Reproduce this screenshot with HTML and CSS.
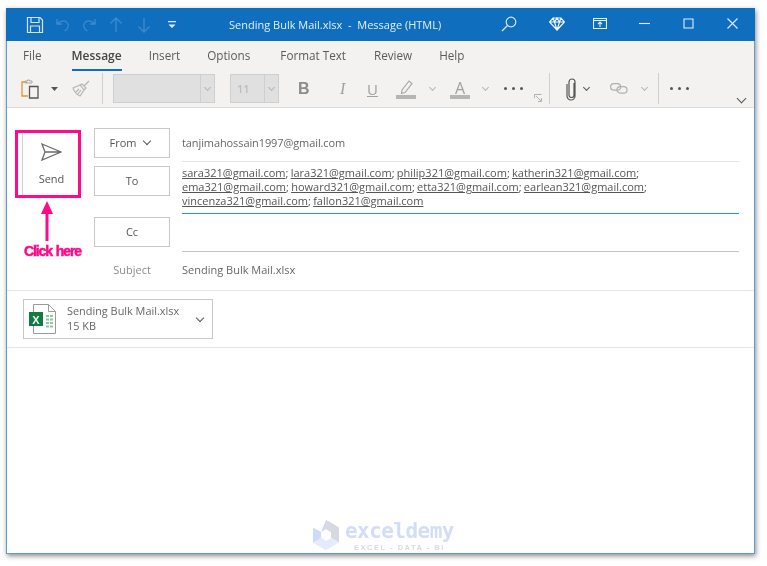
FILE: index.html
```html
<!DOCTYPE HTML>
<html>

<head>
  <meta charset="UTF-8">
  <title>Sending Bulk Mail.xlsx - Message (HTML)</title>
  <link rel="stylesheet" href="styles.css">
</head>

<body>
  <div class="window">

    <div class="titlebar">
      <div class="quick">
        <svg class="qa qa-save" width="18" height="18" viewBox="0 0 18 18" fill="none" stroke="#d5e6f6" stroke-width="1.2"><path d="M1.5 1.5h12.5l2.5 2.5v12.500h-15z"/><path d="M5 1.500v5h8v-5M4.500 16.500v-6.500h9v6.500"/></svg>
        <svg class="qa qa-undo" width="16" height="16" viewBox="0 0 16 16" fill="none" stroke="#3d8bcf" stroke-width="1.300"><path d="M2 2v5h5M2.500 6.500c3-3.500 8-3.500 10 -.5s.5 6-3 8"/></svg>
        <svg class="qa qa-redo" width="16" height="16" viewBox="0 0 16 16" fill="none" stroke="#3d8bcf" stroke-width="1.300"><path d="M14 2v5h-5M13.500 6.500c-3-3.500-8-3.500-10-.5s-.5 6 3 8"/></svg>
        <svg class="qa qa-up" width="14" height="16" viewBox="0 0 14 16" fill="none" stroke="#3d8bcf" stroke-width="1.300"><path d="M7 15v-14M1.500 6.500l5.500-5.500 5.500 5.500"/></svg>
        <svg class="qa qa-down" width="14" height="16" viewBox="0 0 14 16" fill="none" stroke="#3d8bcf" stroke-width="1.300"><path d="M7 1v14M1.500 9.500l5.500 5.500 5.500-5.500"/></svg>
        <svg class="qa qa-more" width="8" height="8" viewBox="0 0 8 8" fill="#e3eef8"><path d="M0 0h8v1.200h-8zM.5 3.500h7l-3.500 3.500z"/></svg>
      </div>
      <div class="doc-title">Sending Bulk Mail.xlsx&nbsp; -&nbsp; Message (HTML)</div>
      <div class="win-buttons">
        <svg class="wb wb-search" width="16" height="16" viewBox="0 0 16 16" fill="none" stroke="#d5e6f6" stroke-width="1.200"><circle cx="10" cy="6" r="4.800"/><path d="M6.500 9.500l-5.500 5.500"/></svg>
        <svg class="wb wb-gem" width="16" height="14" viewBox="0 0 16 14" fill="none" stroke="#f2f7fc" stroke-width="1.200"><path d="M4 1h8l3.500 4-7.500 8-7.500-8zM.5 5h15M5.500 5l2.500 8 2.500-8M4 1l1.500 4 2.500-4 2.500 4 1.500-4"/></svg>
        <svg class="wb wb-box" width="14" height="11" viewBox="0 0 14 11" fill="none" stroke="#e3eef8" stroke-width="1.100"><path d="M.5.500h13v10h-13zM.5 2.500h13M7 9v-5M5 6l2-2 2 2"/></svg>
        <svg class="wb wb-min" width="11" height="11" viewBox="0 0 11 11" fill="none" stroke="#e3eef8" stroke-width="1.100"><path d="M0 5.500h11"/></svg>
        <svg class="wb wb-max" width="11" height="11" viewBox="0 0 11 11" fill="none" stroke="#e3eef8" stroke-width="1.100"><path d="M1 1h9v9h-9z"/></svg>
        <svg class="wb wb-close" width="11" height="11" viewBox="0 0 11 11" fill="none" stroke="#e3eef8" stroke-width="1.100"><path d="M.5.500l10 10M10.500.500l-10 10"/></svg>
      </div>
    </div>

    <div class="tabs">
      <span class="tab tab-file">File</span>
      <span class="tab tab-message">Message</span>
      <span class="tab tab-insert">Insert</span>
      <span class="tab tab-options">Options</span>
      <span class="tab tab-format">Format Text</span>
      <span class="tab tab-review">Review</span>
      <span class="tab tab-help">Help</span>
    </div>

    <div class="ribbon">
      <svg class="ri ri-paste" width="18" height="20" viewBox="0 0 18 20" fill="none"><path d="M6 3h-5v14h6" stroke="#e8932c" stroke-width="1.300"/><path d="M4 4v-2h2.500v-1h2v1h2.500v2z" stroke="#a8a8a8"/><path d="M8.500 7.500h8.500v11.500h-8.500z" stroke="#555" stroke-width="1.300"/></svg>
      <svg class="ri ri-caret1 caret-dark" width="7" height="4" viewBox="0 0 7 4"><path d="M0 0h7l-3.500 4z" fill="#555"/></svg>
      <svg class="ri ri-brush" width="18" height="17" viewBox="0 0 18 17" fill="none" stroke="#b5b5b5" stroke-width="1.200"><path d="M1 8l7-3 4 5-4 6c-3-1-6-5-7-8zM8 5l2-1 4 4-2 2M12 6l5-5M4 12l3-3M6 14l3-4"/></svg>
      <div class="sep sep-a"></div>
      <div class="combo combo-font"><span class="combo-text"></span><span class="combo-arrow"><i class="chev"></i></span></div>
      <div class="combo combo-size"><span class="combo-text">11</span><span class="combo-arrow"><i class="chev"></i></span></div>
      <span class="ri ri-b">B</span>
      <span class="ri ri-i">I</span>
      <span class="ri ri-u">U</span>
      <svg class="ri ri-pen" width="20" height="20" viewBox="0 0 20 20" fill="none"><path d="M6 11l7-9 3 2.500-7 9-3.500 1z" stroke="#a8a8a8" stroke-width="1.200"/><path d="M0 16h20v4h-20z" fill="#b5b5b5"/></svg>
      <i class="chev ri ri-pcaret"></i>
      <div class="ri ri-a"><span>A</span></div>
      <i class="chev ri ri-acaret"></i>
      <span class="ri ri-dots1"><i></i><i></i><i></i></span>
      <svg class="ri ri-launch" width="8" height="8" viewBox="0 0 8 8" fill="none" stroke="#b0b0b0"><path d="M7.500 4v3.500h-3.500M.5 4v-3.500h7M2 2l5 5"/></svg>
      <div class="sep sep-b"></div>
      <svg class="ri ri-clip" width="11" height="24" viewBox="0 0 11 24" fill="none" stroke="#555" stroke-width="1.200"><path d="M8 6v12a2.500 2.500 0 0 1-5 0v-13a3 3 0 0 1 6 0v14a4 4 0 0 1-8 0v-12"/></svg>
      <i class="chev chev-dark ri ri-ccaret"></i>
      <svg class="ri ri-link" width="18" height="11" viewBox="0 0 18 11" fill="none" stroke="#b0b0b0" stroke-width="1.200"><rect x=".6" y=".6" width="10" height="6.500" rx="3.200"/><rect x="7" y="3.600" width="10" height="6.500" rx="3.200"/></svg>
      <i class="chev ri ri-lcaret"></i>
      <div class="sep sep-c"></div>
      <span class="ri ri-dots2"><i></i><i></i><i></i></span>
      <i class="chev chev-dark ri ri-collapse"></i>
    </div>

    <div class="compose">
      <div class="send-btn">
        <svg width="21" height="18" viewBox="0 0 21 18" fill="none" stroke="#6a6a6a" stroke-width="1.300"><path d="M1 1l19 8-19 8 3-8zM4 9h16"/></svg>
        <span>Send</span>
      </div>
      <div class="fields">
        <div class="row row-from">
          <div class="btn-box">From <i class="chev chev-dark chev-from"></i></div>
          <div class="field field-from">tanjimahossain1997@gmail.com</div>
        </div>
        <div class="row row-to">
          <div class="btn-box">To</div>
          <div class="field-wrap">
            <div class="field-to">
              <u>sara321@gmail.com</u>; <u>lara321@gmail.com</u>; <u>philip321@gmail.com</u>; <u>katherin321@gmail.com</u>;<br>
              <u>ema321@gmail.com</u>; <u>howard321@gmail.com</u>; <u>etta321@gmail.com</u>; <u>earlean321@gmail.com</u>;<br>
              <u>vincenza321@gmail.com</u>; <u>fallon321@gmail.com</u>
            </div>
            <div class="focus-line"></div>
          </div>
        </div>
        <div class="row row-cc">
          <div class="btn-box">Cc</div>
          <div class="field field-cc"></div>
        </div>
        <div class="row row-subject">
          <div class="subject-label">Subject</div>
          <div class="field-subject">Sending Bulk Mail.xlsx</div>
        </div>
      </div>
    </div>

    <div class="attachments">
      <div class="attach-card">
        <svg class="xl-icon" width="28" height="30" viewBox="0 0 28 30">
          <path d="M4.500.5h15l7 7v22h-22z" fill="#fff" stroke="#9a9a9a"/>
          <path d="M19.500.5v7h7" fill="none" stroke="#9a9a9a"/>
          <path d="M17 11h3v2h-3zM21 11h3v2h-3zM17 14.500h3v2h-3zM21 14.500h3v2h-3zM17 18h3v2h-3zM21 18h3v2h-3zM17 21.500h3v2h-3zM21 21.500h3v2h-3z" fill="#8fc5a2"/>
          <rect x="0" y="8" width="14" height="14" fill="#107c41"/>
          <text class="xl-letter" x="7" y="19.500" text-anchor="middle">X</text>
        </svg>
        <div class="attach-info">
          <div>Sending Bulk Mail.xlsx</div>
          <div>15 KB</div>
        </div>
        <i class="chev chev-dark chev-attach"></i>
      </div>
    </div>
  </div>

  <!-- annotation on top of the screenshot -->
  <div class="mark-box"></div>
  <svg class="mark-arrow" width="14" height="40" viewBox="0 0 14 40"><path d="M7 0l6 13h-4.500v27h-3v-27h-4.500z" fill="#ff0a8c"/></svg>
  <div class="mark-text">Click here</div>

  <div class="watermark">
    <svg width="28" height="32" viewBox="0 0 28 32">
      <path d="M14 1l13 7.500-8 4.500-5-3-5 3z" fill="#ccd8f4"/>
      <path d="M14 1l13 7.500v15l-8-4.500v-6l-5-3z" fill="#d6d9de"/>
      <path d="M1 8.500l8 4.500v6l5 3v9l-13-7.500z" fill="#cddaf8"/>
      <path d="M14 22l5-3 8 4.500-13 7.500-13-7.500 8-4.500z" fill="#e4ecfb"/>
    </svg>
    <div class="wm-text">
      <div class="wm-name">exceldemy</div>
      <div class="wm-sub">EXCEL - DATA - BI</div>
    </div>
  </div>
</body>

</html>
```

FILE: styles.css
```css
html, body {
  margin: 0;
  padding: 0;
  background: #fff;
}

body {
  width: 767px;
  height: 566px;
  overflow: hidden;
  position: relative;
  font-family: "Open Sans", "Noto Sans", sans-serif;
  color: #555;
  filter: blur(.3px);
}

.window {
  margin: 8px 0 0 6px;
  width: 747px;
  height: 545px;
  border: 1px solid #5c9bd6;
  border-top: 0;
  background: #fff;
  box-shadow: 1px 2px 5px rgba(0, 0, 0, .45);
  display: flex;
  flex-direction: column;
}

/* title bar */
.titlebar {
  flex: none;
  height: 33px;
  background: #106ebe;
  display: flex;
  align-items: center;
  margin: 0 -1px;
  color: #e3eef8;
  font-size: 11px;
}

.quick {
  flex: none;
  width: 223px;
  display: flex;
  align-items: center;
  padding-left: 20px;
  box-sizing: border-box;
}

.qa-undo { margin-left: 11px; }
.qa-redo { margin-left: 10px; }
.qa-up { margin-left: 12px; }
.qa-down { margin-left: 14px; }
.qa-more { margin-left: 17px; }

.doc-title {
  flex: 1;
  white-space: nowrap;
}

.win-buttons {
  flex: none;
  display: flex;
  align-items: center;
  padding-right: 17px;
  margin-top: -2px;
}

.wb-gem { margin-left: 32px; }
.wb-box { margin-left: 28px; }
.wb-min { margin-left: 32px; }
.wb-max { margin-left: 33px; }
.wb-close { margin-left: 33px; }

/* tabs */
.tabs {
  flex: none;
  height: 31px;
  background: #f3f2f1;
  display: flex;
  align-items: flex-start;
  font-size: 11.700px;
  line-height: 17px;
  padding-top: 6px;
  box-sizing: border-box;
  position: relative;
}

.tab { color: #5a5a5a; }
.tab-file { margin-left: 16px; }
.tab-message {
  margin-left: 30px;
  font-size: 12px;
  font-weight: 600;
  color: #444;
  height: 24px;
  border-bottom: 2px solid #106ebe;
  box-sizing: border-box;
}
.tab-insert { margin-left: 27px; }
.tab-options { margin-left: 27px; }
.tab-format { margin-left: 30px; }
.tab-review { margin-left: 28px; }
.tab-help { margin-left: 27px; }

/* ribbon */
.ribbon {
  flex: none;
  height: 36px;
  background: #f3f2f1;
  border-bottom: 1px solid #dcdcdc;
  box-sizing: border-box;
  padding-bottom: 2px;
  display: flex;
  align-items: center;
  position: relative;
}

.chev {
  display: inline-block;
  width: 4px;
  height: 4px;
  border-right: 1px solid #b5b5b5;
  border-bottom: 1px solid #b5b5b5;
  transform: rotate(45deg);
  margin-top: -3px;
}

.chev-dark {
  border-color: #555;
  border-width: 1.3px;
}

.sep {
  flex: none;
  width: 1px;
  height: 31px;
  background: #cfcfcf;
}

.ri-paste { margin-left: 14px; }
.ri-caret1 { margin-left: 12px; }
.ri-brush { margin-left: 14px; }
.sep-a { margin-left: 12px; }

.combo {
  flex: none;
  height: 29px;
  background: #e0e0e0;
  border: 1px solid #cfcfcf;
  box-sizing: border-box;
  display: flex;
  font-size: 11px;
  color: #bdbdbd;
  font-weight: 600;
}

.combo-font { width: 102px; margin-left: 10px; }
.combo-size { width: 49px; margin-left: 15px; }

.combo-text {
  flex: 1;
  line-height: 27px;
  padding-left: 6px;
}

.combo-arrow {
  flex: none;
  width: 13px;
  border-left: 1px solid #cfcfcf;
  display: flex;
  align-items: center;
  justify-content: center;
}

.ri-b {
  margin-left: 19px;
  width: 13px;
  font: bold 16px "Liberation Sans", sans-serif;
  color: #8c8c8c;
}

.ri-i {
  margin-left: 29px;
  width: 8px;
  font: italic 16px "Liberation Serif", serif;
  color: #a0a0a0;
}

.ri-u {
  margin-left: 19px;
  width: 11px;
  font: 15px "Open Sans", sans-serif;
  color: #a0a0a0;
  text-decoration: underline;
}

.ri-pen { margin-left: 18px; }
.ri-pcaret { margin-left: 14px; }

.ri-a {
  margin-left: 15px;
  width: 20px;
  height: 21px;
  border-bottom: 4px solid #b5b5b5;
  text-align: center;
  font-size: 16px;
  line-height: 20px;
  color: #a0a0a0;
  box-sizing: border-box;
}

.ri-acaret { margin-left: 13px; }

.ri-dots1, .ri-dots2 {
  display: flex;
  gap: 5px;
}

.ri-dots1 i, .ri-dots2 i {
  width: 3px;
  height: 3px;
  border-radius: 50%;
  background: #555;
}

.ri-dots1 { margin-left: 16px; }
.ri-launch { margin-left: 11px; margin-top: 18px; }
.sep-b { margin-left: 7px; }
.ri-clip { margin-left: 16px; }
.ri-ccaret { margin-left: 7px; }
.ri-link { margin-left: 21px; }
.ri-lcaret { margin-left: 14px; }
.sep-c { margin-left: 11px; }
.ri-dots2 { margin-left: 11px; }

.ri-collapse {
  position: absolute;
  right: 9px;
  bottom: 5px;
  width: 6px;
  height: 6px;
}

/* header fields */
.compose {
  flex: none;
  height: 183px;
  border-bottom: 1px solid #e6e6e6;
  box-sizing: border-box;
  display: flex;
  align-items: flex-start;
  padding: 20px 15px 0 15px;
  font-size: 11px;
}

.send-btn {
  flex: none;
  width: 58px;
  height: 67px;
  margin-top: 2px;
  border-left: 1px solid #d0d0d0;
  box-sizing: border-box;
  display: flex;
  flex-direction: column;
  align-items: center;
  padding-top: 13px;
  gap: 10px;
  color: #555;
  line-height: 15px;
}

.fields {
  flex: 1;
  margin-left: 14px;
}

.row {
  display: flex;
  align-items: flex-start;
}

.btn-box {
  flex: none;
  width: 76px;
  height: 30px;
  border: 1px solid #c8c8c8;
  box-sizing: border-box;
  padding-bottom: 1px;
  margin-right: 12px;
  display: flex;
  align-items: center;
  justify-content: center;
  gap: 8px;
  color: #555;
}

.row-from .btn-box { padding-right: 4px; }
.chev-from { width: 5px; height: 5px; }

.field {
  flex: 1;
  border-bottom: 1px solid #e4e4e4;
  box-sizing: border-box;
  color: #666;
}

.row-from .field {
  height: 34px;
  line-height: 29px;
  letter-spacing: -.1px;
}

.row-to { padding-top: 4px; }

.field-wrap { flex: 1; }

.field-to {
  height: 47px;
  line-height: 14px;
  font-size: 11px;
  word-spacing: -.6px;
  white-space: nowrap;
  color: #555;
}

.focus-line {
  height: 1px;
  background: #1e90ff;
}

.row-cc { padding-top: 3px; }
.field-cc { height: 35px; border-bottom-color: #c4c4c4; }

.row-subject {
  height: 34px;
  align-items: center;
}

.subject-label {
  flex: none;
  width: 76px;
  margin-right: 12px;
  text-align: center;
  color: #8a8a8a;
}

.field-subject { color: #666; }

/* attachment strip */
.attachments {
  flex: none;
  height: 57px;
  border-bottom: 1px solid #e6e6e6;
  box-sizing: border-box;
  padding: 8px 0 0 16px;
}

.attach-card {
  width: 190px;
  height: 40px;
  border: 1px solid #c8c8c8;
  box-sizing: border-box;
  display: flex;
  align-items: center;
  padding-left: 5px;
  position: relative;
}

.xl-icon { flex: none; }

.xl-letter {
  font: bold 11px "Liberation Sans", sans-serif;
  fill: #fff;
}

.attach-info {
  flex: 1;
  margin-left: 10px;
  padding-bottom: 2px;
  font-size: 10.900px;
  line-height: 15px;
  color: #666;
  white-space: nowrap;
}

.chev-attach {
  flex: none;
  width: 5px;
  height: 5px;
  margin-right: 9px;
}

/* annotation */
.mark-box {
  position: absolute;
  left: 15px;
  top: 130px;
  width: 66px;
  height: 68px;
  border: 3px solid #ff0a8c;
  box-sizing: border-box;
}

.mark-arrow {
  position: absolute;
  left: 40px;
  top: 201px;
}

.mark-text {
  position: absolute;
  left: 24px;
  top: 243px;
  font: bold 14px/17px "Liberation Sans", sans-serif;
  letter-spacing: -1.100px;
  word-spacing: 1px;
  color: #ff0a8c;
  -webkit-text-stroke: .5px #ff0a8c;
  white-space: nowrap;
}

/* watermark */
.watermark {
  position: absolute;
  left: 312px;
  top: 519px;
  display: flex;
  gap: 5px;
}

.wm-text {
  line-height: 1;
}

.wm-name {
  font: bold 21px/24px "DejaVu Sans Mono", monospace;
  color: #d3ddf8;
  letter-spacing: -.55px;
}

.wm-sub {
  font: bold 7.500px/9px "Liberation Sans", sans-serif;
  letter-spacing: 1.500px;
  color: #dadada;
  text-align: center;
}
```
